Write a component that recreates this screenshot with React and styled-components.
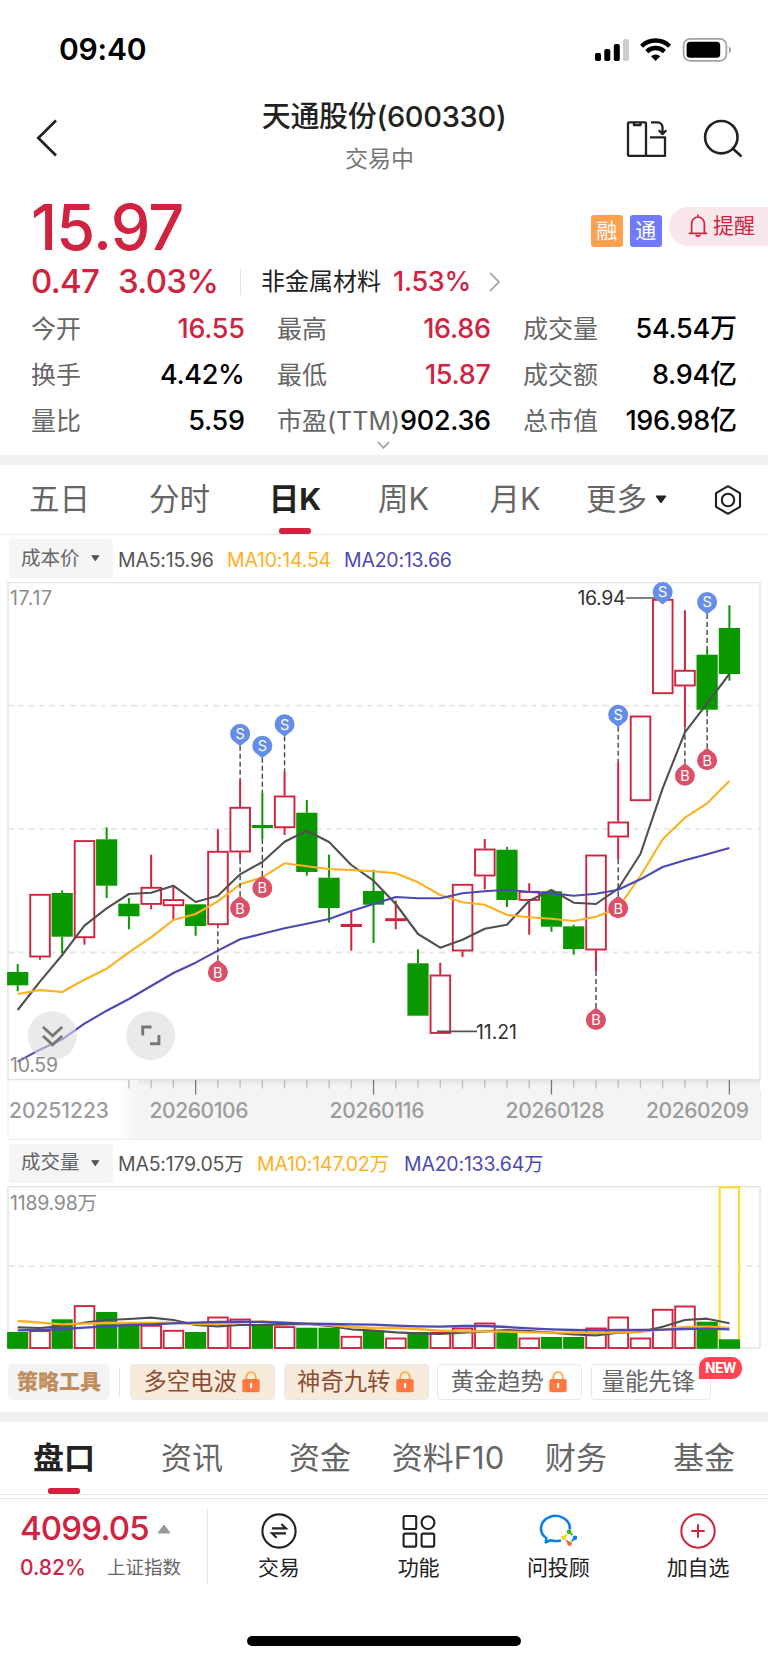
import React from "react";
//Styling
import styled, { createGlobalStyle } from "styled-components";

//Data
const RED = "#d0233f";
const GREEN = "#0a9800";

const stats = [
  { label: "今开", value: "16.55", up: true },
  { label: "最高", value: "16.86", up: true },
  { label: "成交量", value: "54.54万" },
  { label: "换手", value: "4.42%" },
  { label: "最低", value: "15.87", up: true },
  { label: "成交额", value: "8.94亿" },
  { label: "量比", value: "5.59" },
  { label: "市盈(TTM)", value: "902.36" },
  { label: "总市值", value: "196.98亿" },
];

const periods = ["五日", "分时", "日K", "周K", "月K"];
const sections = ["盘口", "资讯", "资金", "资料F10", "财务", "基金"];

const priceAverages = [
  { text: "MA5:15.96", color: "#555", width: 109 },
  { text: "MA10:14.54", color: "#ffb01f", width: 117 },
  { text: "MA20:13.66", color: "#4c49b4", width: 120 },
];

const volumeAverages = [
  { text: "MA5:179.05万", color: "#555", width: 139 },
  { text: "MA10:147.02万", color: "#ffb01f", width: 147 },
  { text: "MA20:133.64万", color: "#4c49b4", width: 150 },
];

//[up, body top, body bottom, high, low]
const candles = [
  [0, 972, 985.3, 964, 991.3],
  [1, 894, 957.3, 894, 959.7],
  [0, 893, 936.7, 890.3, 953.3],
  [1, 840.3, 938, 840.3, 944.7],
  [0, 839.3, 885.7, 827.3, 898],
  [0, 903.7, 916.3, 898, 929.3],
  [1, 887, 904.7, 854.7, 909.3],
  [1, 899.3, 906, 886.7, 920],
  [0, 904.3, 926, 904.3, 935.7],
  [1, 851, 925, 829.3, 925],
  [1, 807, 852.3, 780, 859.3],
  [0, 825, 828, 792.3, 839],
  [1, 795.7, 828, 771.3, 835],
  [0, 812.7, 872, 800, 875.7],
  [0, 877.7, 908, 854.7, 922.7],
  [1, 924, 927, 910.7, 950.7],
  [0, 891, 904.7, 869.7, 943],
  [1, 918.2, 921.2, 900.7, 929.3],
  [0, 963.3, 1015.7, 949.3, 1015.7],
  [1, 974.7, 1033.7, 962.7, 1033.7],
  [1, 884, 951.3, 884, 957],
  [1, 848.7, 876.3, 839, 889.3],
  [0, 849.7, 900, 847, 907],
  [1, 891, 900.7, 883.3, 934.7],
  [0, 891.3, 926.7, 891.3, 931.7],
  [0, 926.3, 949, 924.7, 954.7],
  [1, 854.7, 950.3, 854.7, 971.3],
  [1, 821.7, 837.3, 761.7, 859.3],
  [1, 715.7, 801, 715.7, 801],
  [1, 599, 694, 599, 694],
  [1, 670, 686.3, 610.3, 727.3],
  [0, 654.7, 709.7, 649, 712.3],
  [0, 628, 674, 605.3, 680.7],
];

const ma5 = [
  1010, 981.7, 955, 925.7, 908.3, 894, 892.7, 885.7, 902, 895.7, 874.3, 862,
  841.7, 830.7, 842, 865, 880.7, 904, 934, 947.7, 939.7, 928.7, 924.7, 900.7,
  890, 902.7, 904, 888.7, 854, 788.3, 732.3, 703.3, 674,
];
const ma10 = [
  994, 990, 992, 979.7, 968.7, 952.3, 937.3, 920, 914, 901.3, 884.3, 877.3,
  863.3, 866.3, 869, 870, 871.3, 873.3, 882.3, 895, 902.3, 904.7, 915, 917.3,
  918.7, 921, 916.7, 908, 876, 839.3, 817.7, 803.3, 781,
];
const ma20 = [
  1061.7, 1049.7, 1039.3, 1023.7, 1010.7, 999, 986, 973, 962.7, 950.7, 939.3,
  933.7, 928.3, 923.7, 919, 911, 904, 897, 898.3, 898.3, 893.3, 891.3, 889.7,
  892, 893.3, 895.7, 893.7, 889.7, 879.3, 867, 860.3, 854.3, 848,
];

//[candle index, center y]
const sells = [
  [10, 733.7],
  [11, 745.7],
  [12, 724.3],
  [27, 714.7],
  [29, 592],
  [31, 602],
];
const buys = [
  [9, 972.3],
  [10, 908.3],
  [11, 888],
  [26, 1020],
  [27, 908.3],
  [30, 775.7],
  [31, 760.3],
];

const volumes = [
  1332, 1330.3, 1319.3, 1305.3, 1312, 1324.3, 1325, 1330, 1332, 1316.7, 1318.7,
  1325, 1326.3, 1327.7, 1327.7, 1336, 1330.3, 1337.7, 1332, 1332, 1327.7,
  1322.7, 1332, 1337.7, 1337, 1337, 1327.7, 1316.7, 1337.7, 1309, 1305.7,
  1321.7, 1339.3,
];
const vol5 = [
  562, 564, 558, 548, 540, 537, 533, 540, 555, 559, 555, 555, 553, 552, 558,
  568, 572, 577, 580, 582, 578, 574, 570, 573, 578, 583, 586, 578, 576, 560,
  540, 536, 550,
];
const vol10 = [
  543, 548, 553, 551, 549, 549, 549, 548, 552, 552, 548, 544, 547, 551, 555,
  561, 564, 564, 567, 572, 574, 574, 575, 577, 578, 578, 579, 577, 575, 569,
  561, 560, 564,
];
const vol20 = [
  571, 570, 567, 563, 559, 555, 553, 550, 548, 546, 545, 546, 549, 551, 552,
  553, 554, 557, 559, 560, 558, 558, 561, 565, 568, 570, 571, 570, 570, 569,
  567, 566, 568,
];

const dates = [
  { text: "20251223", x: 9, width: 100 },
  { text: "20260106", x: 149.5, width: 99 },
  { text: "20260116", x: 329.5, width: 95 },
  { text: "20260128", x: 505.5, width: 99 },
  { text: "20260209", x: 646, width: 103 },
];

//Helpers
const xAt = (i) => 17.7 + i * 22.24;
const toPoints = (list) => list.map((y, i) => `${xAt(i)},${y}`).join(" ");
const toVolume = (list) => list.map((y) => 1140 + y / 3);

const Line = ({ list, color, width = 2.1 }) => (
  <polyline
    points={toPoints(list)}
    fill="none"
    stroke={color}
    strokeWidth={width}
    strokeLinejoin="round"
  />
);

const Candle = ({ i, data }) => {
  const [up, top, bottom, high, low] = data;
  const x = xAt(i);
  const color = up ? RED : GREEN;
  const solid = !up || bottom - top < 4;
  return (
    <g>
      {high < top && (
        <path d={`M${x} ${high}V${top}`} stroke={color} strokeWidth="2" />
      )}
      {low > bottom && (
        <path d={`M${x} ${bottom}V${low}`} stroke={color} strokeWidth="2" />
      )}
      {solid ? (
        <rect
          x={x - 10.6}
          y={top}
          width="21.2"
          height={bottom - top}
          fill={color}
        />
      ) : (
        <rect
          x={x - 9.7}
          y={top + 0.8}
          width="19.6"
          height={bottom - top - 1.6}
          fill="#fff"
          stroke={color}
          strokeWidth="1.9"
        />
      )}
    </g>
  );
};

const Marker = ({ i, y, sell }) => {
  const x = xAt(i);
  const dir = sell ? 1 : -1;
  const end = sell ? candles[i][3] : candles[i][4];
  const start = y + 12 * dir;
  const color = sell ? "#658ee8" : "#da5068";
  return (
    <g>
      {(end - start) * dir > 0 && (
        <path
          d={`M${x} ${start}V${end}`}
          stroke="#444"
          strokeWidth="1.4"
          strokeDasharray="5 3"
        />
      )}
      <circle cx={x} cy={y} r="10" fill={color} />
      <path
        d={`M${x - 5} ${y + 8.5 * dir}L${x} ${y + 12.5 * dir}L${x + 5} ${
          y + 8.5 * dir
        }Z`}
        fill={color}
      />
      <ChartText x={x} y={y + 5.2} $size={14.5} $color="#fff" textAnchor="middle">
        {sell ? "S" : "B"}
      </ChartText>
    </g>
  );
};

const Grid = ({ y }) => (
  <path
    d={`M8 ${y}H760`}
    stroke="#e6e6e6"
    strokeWidth="1.8"
    strokeDasharray="6.5 4.5 4.5 5"
  />
);

const PriceChart = () => (
  <Chart width="768" height="558" viewBox="0 582 768 558">
    <defs>
      <linearGradient id="axisFade" x1="0" x2="1">
        <stop offset="0" stopColor="#fff" />
        <stop offset="1" stopColor="#f4f4f4" />
      </linearGradient>
      <linearGradient id="axisShade" x1="0" x2="0" y1="0" y2="1">
        <stop offset="0" stopColor="#e6e6e6" />
        <stop offset="1" stopColor="#f4f4f4" />
      </linearGradient>
    </defs>
    <rect x="138" y="1080" width="622" height="59" fill="#f4f4f4" />
    <rect x="138" y="1080" width="622" height="6" fill="url(#axisShade)" />
    <rect x="118" y="1080" width="20" height="59" fill="url(#axisFade)" />
    <path d="M8 1080V1139.3H760.5V1090" fill="none" stroke="#ececec" />
    <rect x="8" y="582.5" width="752" height="497" fill="none" stroke="#e2e2e2" strokeWidth="1.4" />
    <Grid y={705.7} />
    <Grid y={828.8} />
    <Grid y={952.5} />
    {candles.map((c, i) => (
      <Candle key={i} i={i} data={c} />
    ))}
    <Line list={ma5} color="#505050" />
    <Line list={ma10} color="#ffb01f" />
    <Line list={ma20} color="#4c49b4" />
    <path d="M626 598H655M437 1031.3H477" stroke="#555" strokeWidth="1.7" />
    {sells.map(([i, y]) => (
      <Marker key={i} i={i} y={y} sell />
    ))}
    {buys.map(([i, y]) => (
      <Marker key={i} i={i} y={y} />
    ))}
    <ChartText x="10" y="605" textLength="42">17.17</ChartText>
    <ChartText x="577.5" y="605" textLength="48" $color="#333">16.94</ChartText>
    <ChartText x="476" y="1038.5" textLength="41" $color="#333">11.21</ChartText>
    <circle cx="52.3" cy="1035.7" r="24.5" fill="#dcdcdc" opacity="0.6" />
    <circle cx="150.7" cy="1035.7" r="24.5" fill="#dcdcdc" opacity="0.6" />
    <path
      d="M43 1027l9.6 8.8 9.6-8.8M43 1036l9.6 8.8 9.6-8.8"
      fill="none"
      stroke="#777"
      strokeWidth="2.8"
    />
    <path
      d="M142.7 1035.5V1027H151.5M158.9 1035V1043.7H150"
      fill="none"
      stroke="#777"
      strokeWidth="2.9"
    />
    <ChartText x="10" y="1071.5" textLength="48">10.59</ChartText>
    {candles.map((c, i) =>
      i < 5 ? null : (
        <path
          key={i}
          d={`M${xAt(i)} 1080V${i % 8 === 0 ? 1094.5 : 1088.5}`}
          stroke={i % 8 === 0 ? "#777" : "#bdbdbd"}
          strokeWidth="1.3"
        />
      )
    )}
    {dates.map((d) => (
      <ChartText key={d.text} x={d.x} y="1117.5" textLength={d.width} $size={21} $weight={500} $color="#9c9c9c">
        {d.text}
      </ChartText>
    ))}
  </Chart>
);

const VolumeChart = () => (
  <Chart width="768" height="163" viewBox="0 1186 768 163">
    <rect x="8" y="1186.6" width="752" height="161.4" fill="none" stroke="#e2e2e2" strokeWidth="1.4" />
    <Grid y={1266.2} />
    <rect x="719.7" y="1187.3" width="19.4" height="160" fill="#fff" stroke="#ffd91c" strokeWidth="2" />
    {volumes.map((y, i) => (
      <Candle key={i} i={i} data={[candles[i][0], y, 1348.8, y, 1348.8]} />
    ))}
    <Line list={toVolume(vol5)} color="#505050" />
    <Line list={toVolume(vol10)} color="#ffb01f" width={2.4} />
    <Line list={toVolume(vol20)} color="#4c49b4" width={2.3} />
    <ChartText x="10" y="1210" textLength="87">1189.98万</ChartText>
  </Chart>
);

const Lock = () => (
  <svg width="18" height="22" viewBox="0 0 18 22">
    <path d="M4.3 10V6a4.7 4.9 0 0 1 9.4 0V10" fill="none" stroke="#ffab45" strokeWidth="1.9" />
    <rect x="0.3" y="8" width="17.4" height="13.2" rx="2" fill="#ff7840" />
    <rect x="8" y="12" width="2.2" height="5.2" rx="1" fill="#fff" />
  </svg>
);

const Legend = ({ title, items }) => (
  <LegendRow>
    <Picker>
      {title}
      <svg width="9" height="7" viewBox="0 0 9 7">
        <path d="M0.8 0.7H7.8L4.3 5.8Z" fill="#555" stroke="#555" strokeLinejoin="round" />
      </svg>
    </Picker>
    {items.map((m) => (
      <Average key={m.text} $color={m.color} $width={m.width}>
        {m.text}
      </Average>
    ))}
  </LegendRow>
);

const App = () => {
  return (
    <>
      <GlobalStyle />
      <Page>
        <StatusBar>
          <Clock>09:40</Clock>
          <svg width="139" height="26" viewBox="594 35 139 26">
            <rect x="595" y="52" width="6" height="8" rx="1.8" />
            <rect x="604.3" y="48" width="6" height="12" rx="1.8" />
            <rect x="613.8" y="43" width="6" height="17" rx="1.8" />
            <rect x="623" y="38" width="6" height="22" rx="1.8" fill="#ccc" />
            <g fill="none" stroke="#000" strokeWidth="4.4">
              <path d="M641.6 45.2a20 20 0 0 1 28 0" />
              <path d="M646.8 50.6a12.6 12.6 0 0 1 17.6 0" />
            </g>
            <path d="M655.6 60l-4.6-4.7a6.8 6.8 0 0 1 9.2 0Z" />
            <rect x="683.6" y="37.8" width="42.8" height="22" rx="6.5" fill="none" stroke="#a3a3a3" strokeWidth="1.7" />
            <rect x="686.6" y="40.8" width="33.6" height="16" rx="3.6" />
            <path d="M729 45.5c2.7 1 2.7 6 0 7Z" fill="#a3a3a3" />
          </svg>
        </StatusBar>

        <NavBar>
          <svg width="22" height="40" viewBox="36 116 22 40">
            <path d="M56 118.5L38.3 136L56 153.5" fill="none" stroke="#222" strokeWidth="2.7" />
          </svg>
          <Heading>
            <h1>天通股份(600330)</h1>
            <p>交易中</p>
          </Heading>
          <svg width="118" height="40" viewBox="626 116 118 40">
            <g fill="none" stroke="#222" strokeWidth="2.3" strokeLinejoin="round">
              <rect x="628" y="120.3" width="18" height="33.6" rx="1" />
              <path d="M634 121v2.2h6.5V121" />
              <path d="M650 135.3H665V153.9H646M651 120.3h6.5a5 5 0 0 1 5 5v6M658.7 128.3l3.8 3.8 3.8-3.8" />
              <circle cx="721.3" cy="135.2" r="16.2" strokeWidth="2.6" />
              <path d="M733.3 147L741.5 154.5" strokeWidth="2.6" />
            </g>
          </svg>
        </NavBar>

        <Quote>
          <PriceRow>
            <Price>15.97</Price>
            <Tag $bg="#ffa04e">融</Tag>
            <Tag $bg="#6f79ff">通</Tag>
            <Remind>
              <svg width="20" height="24" viewBox="0 0 20 24">
                <path
                  d="M3.6 19.4V9.8a6.4 6.8 0 0 1 12.8 0V19.4M0.8 19.4H19.2M10 3V0.6M7.6 21.2q2.4 2 4.8 0"
                  fill="none"
                  stroke={RED}
                  strokeWidth="1.7"
                />
              </svg>
              提醒
            </Remind>
          </PriceRow>
          <ChangeRow>
            <Change $width={87}>0.47</Change>
            <Change $width={122}>3.03%</Change>
            <Industry>非金属材料</Industry>
            <IndustryChange>1.53%</IndustryChange>
            <svg width="12" height="20" viewBox="0 0 12 20">
              <path d="M1 0.8L10 10L1 19.2" fill="none" stroke="#aaa" strokeWidth="1.8" />
            </svg>
          </ChangeRow>
          <StatGrid>
            {stats.map((s) => (
              <Stat key={s.label} $up={s.up}>
                <span>{s.label}</span>
                <b>{s.value}</b>
              </Stat>
            ))}
          </StatGrid>
          <Expand width="13" height="8" viewBox="0 0 13 8">
            <path d="M1 1L6.5 6.8L12 1" fill="none" stroke="#999" strokeWidth="1.5" />
          </Expand>
        </Quote>

        <Gap />

        <PeriodTabs>
          {periods.map((p) => (
            <Tab key={p} $active={p === "日K"}>
              {p}
            </Tab>
          ))}
          <Tab>
            更多
            <MoreArrow width="12" height="9" viewBox="0 0 12 9">
              <path d="M1 1H11L6 8Z" fill="#222" stroke="#222" strokeLinejoin="round" />
            </MoreArrow>
          </Tab>
          <Tab>
            <svg width="30" height="32" viewBox="0 0 30 32">
              <g fill="none" stroke="#222" strokeWidth="2.1" strokeLinejoin="round">
                <path d="M15 2.2L27 9.2V22.8L15 29.8L3 22.8V9.2Z" />
                <circle cx="15" cy="16" r="6.2" />
              </g>
            </svg>
          </Tab>
        </PeriodTabs>

        <Legend title="成本价" items={priceAverages} />
        <PriceChart />
        <Legend title="成交量" items={volumeAverages} />
        <VolumeChart />

        <Tools>
          <ToolTitle>策略工具</ToolTitle>
          <Tool $premium>
            多空电波 <Lock />
          </Tool>
          <Tool $premium>
            神奇九转 <Lock />
          </Tool>
          <Tool>
            黄金趋势 <Lock />
          </Tool>
          <Tool $narrow>
            量能先锋
            <Badge>NEW</Badge>
          </Tool>
        </Tools>

        <Gap />

        <SectionTabs>
          {sections.map((s) => (
            <Tab key={s} $active={s === "盘口"} $large>
              {s}
            </Tab>
          ))}
        </SectionTabs>

        <BottomBar>
          <Index>
            <div>
              <strong>4099.05</strong>
              <svg width="14" height="10" viewBox="0 0 14 10">
                <path d="M7 1L13 9H1Z" fill="#999" stroke="#999" strokeLinejoin="round" />
              </svg>
            </div>
            <div>
              <em>0.82%</em>
              <span>上证指数</span>
            </div>
          </Index>
          <Action>
            <svg width="38" height="38" viewBox="0 0 38 38">
              <g fill="none" stroke="#222" strokeWidth="2.1">
                <circle cx="19" cy="19" r="16.6" />
                <path d="M12 16.4H26L21.4 12M26 21.4H12L16.6 25.8" />
              </g>
            </svg>
            交易
          </Action>
          <Action>
            <svg width="38" height="38" viewBox="0 0 38 38">
              <g fill="none" stroke="#222" strokeWidth="2.1">
                <rect x="3.6" y="4" width="12.6" height="13" rx="1.5" />
                <circle cx="28" cy="10.6" r="6.4" />
                <rect x="3.6" y="21.6" width="12.6" height="13" rx="1.5" />
                <rect x="21.6" y="21.6" width="12.6" height="13" rx="1.5" />
              </g>
            </svg>
            功能
          </Action>
          <Action>
            <svg width="38" height="38" viewBox="0 0 38 38">
              <path
                d="M30.8 17.5A14.4 12.6 0 1 0 7.4 26.3L6.8 30.4L11.6 28.2Q16.5 29.8 22 28.4"
                fill="none"
                stroke="#0d80e6"
                strokeWidth="2.6"
                strokeLinejoin="round"
              />
              <g strokeWidth="1.8">
                <path d="M30 20l3.6 3.2" stroke="#2dbb12" />
                <path d="M36 25.8l-3.2 3.4" stroke="#0d80e6" />
                <path d="M30.6 31.5l-3.4-3.2" stroke="#ff6a1c" />
                <path d="M24.8 25.6l3.2-3.2" stroke="#ffcc10" />
              </g>
              <circle cx="30" cy="19.8" r="2.3" fill="#2dbb12" />
              <circle cx="36" cy="25.7" r="2.3" fill="#0d80e6" />
              <circle cx="30.6" cy="31.6" r="2.3" fill="#ff6a1c" />
              <circle cx="24.6" cy="25.7" r="2.3" fill="#ffcc10" />
            </svg>
            问投顾
          </Action>
          <Action>
            <svg width="38" height="38" viewBox="0 0 38 38">
              <g fill="none" stroke={RED} strokeWidth="2">
                <circle cx="19" cy="19" r="16.7" />
                <path d="M12.3 19H25.7M19 12.3V25.7" />
              </g>
            </svg>
            加自选
          </Action>
        </BottomBar>
        <HomeIndicator />
      </Page>
    </>
  );
};

const GlobalStyle = createGlobalStyle`
  * {
    box-sizing: border-box;
    margin: 0;
    padding: 0;
  }
  body {
    background: #fff;
    font-family: Inter, "Noto Sans CJK SC", sans-serif;
    line-height: 1.2;
  }
  svg {
    flex-shrink: 0;
  }
`;

const Page = styled.div`
  width: 768px;
  height: 1663px;
  display: flex;
  flex-direction: column;
  overflow: hidden;
  color: #222;
  white-space: nowrap;
`;

const StatusBar = styled.div`
  height: 96px;
  flex-shrink: 0;
  padding: 1px 35px 0 59px;
  display: flex;
  align-items: center;
  justify-content: space-between;
`;

const Clock = styled.div`
  font-size: 30px;
  font-weight: 600;
  color: #000;
  letter-spacing: -0.2px;
`;

const NavBar = styled.div`
  height: 94px;
  flex-shrink: 0;
  padding: 0 24px 16px 36px;
  display: grid;
  grid-template-columns: 118px 1fr 118px;
  align-items: center;
`;

const Heading = styled.div`
  text-align: center;
  padding-right: 21px;
  h1 {
    font-size: 29px;
    line-height: 42px;
    font-weight: 500;
    letter-spacing: -0.3px;
    padding-left: 9px;
  }
  p {
    font-size: 23px;
    line-height: 42px;
    color: #777;
  }
`;

const Quote = styled.div`
  height: 265px;
  flex-shrink: 0;
  padding-left: 31px;
`;

const PriceRow = styled.div`
  height: 72px;
  display: flex;
  align-items: center;
`;

const Price = styled.div`
  flex: 1;
  font-size: 63px;
  font-weight: 500;
  line-height: 72px;
  padding-top: 1px;
  color: ${RED};
  letter-spacing: -0.8px;
`;

const Tag = styled.div`
  width: 31.5px;
  height: 32px;
  margin: 9px 7.5px 0 0;
  border-radius: 3px;
  background: ${(props) => props.$bg};
  color: #fff;
  font-size: 21px;
  line-height: 32px;
  text-align: center;
`;

const Remind = styled.div`
  width: 99px;
  height: 39px;
  padding-left: 19px;
  display: flex;
  align-items: center;
  gap: 5px;
  border-radius: 20px 0 0 20px;
  background: #f9e8eb;
  color: ${RED};
  font-size: 21px;
`;

const ChangeRow = styled.div`
  height: 40px;
  display: flex;
  align-items: center;
`;

const Change = styled.div`
  width: ${(props) => props.$width}px;
  font-size: 33px;
  font-weight: 500;
  letter-spacing: -0.7px;
  color: ${RED};
`;

const Industry = styled.div`
  height: 26px;
  line-height: 26px;
  width: 153px;
  padding-left: 20px;
  border-left: 1px solid #e2e2e2;
  font-size: 24px;
`;

const IndustryChange = styled.div`
  width: 96px;
  font-size: 27px;
  font-weight: 500;
  letter-spacing: -0.3px;
  color: ${RED};
`;

const StatGrid = styled.div`
  padding-top: 3px;
  display: grid;
  grid-template-columns: repeat(3, 213px);
  column-gap: 33px;
  grid-auto-rows: 46px;
`;

const Stat = styled.div`
  display: flex;
  align-items: baseline;
  justify-content: space-between;
  line-height: 47px;
  span {
    font-size: 25px;
    color: #666;
  }
  b {
    font-size: 27px;
    font-weight: 500;
    letter-spacing: -0.3px;
    margin-right: -0.6px;
    color: ${(props) => (props.$up ? RED : "#000")};
  }
`;

const Expand = styled.svg`
  display: block;
  margin: -2px 0 0 346px;
`;

const Gap = styled.div`
  height: 10px;
  flex-shrink: 0;
  background: #f1f1f1;
`;

const PeriodTabs = styled.div`
  height: 70px;
  flex-shrink: 0;
  display: grid;
  grid-template-columns: 119px 121px 110px 107px 116px 115px 80px;
  border-bottom: 1.5px solid #ececec;
`;

const SectionTabs = styled.div`
  height: 73px;
  flex-shrink: 0;
  display: grid;
  grid-template-columns: repeat(6, 1fr);
  border-bottom: 1.5px solid #e8e8e8;
`;

const Tab = styled.div`
  position: relative;
  display: flex;
  align-items: center;
  justify-content: center;
  font-size: ${(props) => (props.$large ? 31 : 30.5)}px;
  font-weight: ${(props) => (props.$active ? 700 : 400)};
  color: ${(props) => (props.$active ? "#222" : "#666")};
  &::after {
    content: "";
    display: ${(props) => (props.$active ? "block" : "none")};
    position: absolute;
    bottom: 0;
    left: calc(50% - 16px);
    width: 32px;
    height: 6px;
    border-radius: 2.5px;
    background: ${RED};
  }
`;

const MoreArrow = styled.svg`
  margin: 0 8px 0 8px;
`;

const LegendRow = styled.div`
  height: 47px;
  flex-shrink: 0;
  padding: 0 0 0 9px;
  display: flex;
  align-items: center;
  & + svg + & {
    height: 46px;
  }
`;

const Picker = styled.div`
  width: 104px;
  height: 39px;
  margin-right: 5px;
  padding: 0 13px 0 12px;
  display: flex;
  align-items: center;
  justify-content: space-between;
  border-radius: 4px;
  background: #f5f5f5;
  color: #666;
  font-size: 19.5px;
`;

const Average = styled.div`
  width: ${(props) => props.$width}px;
  padding-top: 4px;
  font-size: 19.5px;
  letter-spacing: -0.2px;
  color: ${(props) => props.$color};
`;

const Chart = styled.svg`
  display: block;
`;

const ChartText = styled.text`
  font-size: ${(props) => props.$size || 19.5}px;
  font-weight: ${(props) => props.$weight || 400};
  fill: ${(props) => props.$color || "#8c8c8c"};
`;

const Tools = styled.div`
  height: 63px;
  flex-shrink: 0;
  padding: 15px 0 0 8px;
  display: flex;
`;

const ToolTitle = styled.div`
  width: 102px;
  height: 36px;
  margin-right: 20px;
  border-radius: 5px;
  background: #f3f3f3;
  color: #c08d5c;
  font-size: 21px;
  font-weight: 900;
  line-height: 36px;
  text-align: center;
  position: relative;
  &::after {
    content: "";
    position: absolute;
    left: 111px;
    top: 4px;
    width: 1px;
    height: 29px;
    background: #e2e2e2;
  }
`;

const Tool = styled.div`
  position: relative;
  width: ${(props) => (props.$narrow ? 120 : 145)}px;
  height: 36px;
  margin-right: ${(props) => (props.$narrow ? 0 : 8.6)}px;
  padding-left: ${(props) => (props.$narrow ? 10 : 12.5)}px;
  display: flex;
  align-items: center;
  gap: 5.5px;
  border: 1.5px solid #e9e9e9;
  border-radius: 4px;
  background: ${(props) => (props.$premium ? "#f7ecdc" : "#fff")};
  color: ${(props) => (props.$premium ? "#8f4c34" : "#666")};
  font-size: 23.3px;
`;

const Badge = styled.div`
  position: absolute;
  top: -8px;
  left: 107px;
  width: 43px;
  height: 22px;
  border-radius: 10px 10px 10px 0;
  background: #ff4450;
  color: #fff;
  font: 700 15px/22px Roboto, sans-serif;
  letter-spacing: -0.5px;
  text-align: center;
`;

const BottomBar = styled.div`
  height: 90px;
  flex-shrink: 0;
  margin-top: 3px;
  display: grid;
  grid-template-columns: 209px repeat(4, 1fr);
  column-gap: 0;
  border-top: 1px solid #e8e8e8;
`;

const Index = styled.div`
  width: 208px;
  height: 76px;
  margin-top: 10px;
  padding-left: 20px;
  border-right: 1px solid #e8e8e8;
  color: ${RED};
  div {
    height: 39px;
    display: flex;
    align-items: center;
    gap: 8px;
  }
  strong {
    font-size: 33px;
    font-weight: 500;
    letter-spacing: -0.8px;
  }
  em {
    width: 79px;
    font-size: 21px;
    font-weight: 500;
    font-style: normal;
  }
  span {
    color: #666;
    font-size: 18.5px;
  }
`;

const Action = styled.div`
  padding-top: 13px;
  display: flex;
  flex-direction: column;
  align-items: center;
  font-size: 21px;
  line-height: 36px;
`;

const HomeIndicator = styled.div`
  width: 274px;
  height: 10px;
  margin: 48px auto 0;
  flex-shrink: 0;
  border-radius: 5px;
  background: #000;
`;

export default App;
